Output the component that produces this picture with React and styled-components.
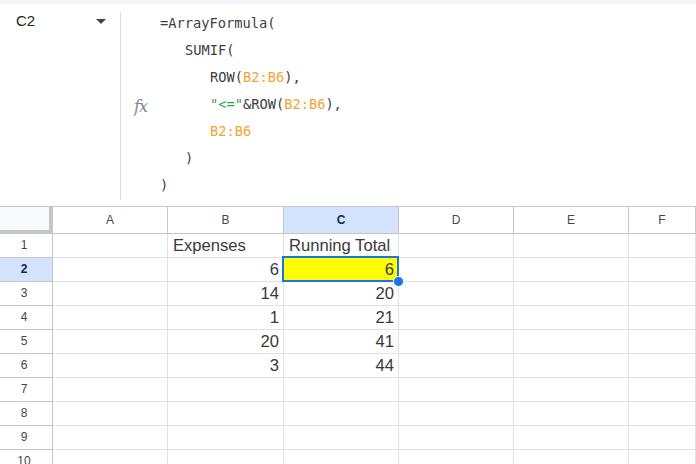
import React from "react";
import styled, { createGlobalStyle } from "styled-components";

const Global = createGlobalStyle`
  html, body { margin: 0; padding: 0; background: #fff; }
  body { width: 696px; height: 464px; overflow: hidden; font-family: "Liberation Sans", Arial, sans-serif; }
`;

const Page = styled.div`
  width: 696px;
  height: 464px;
  display: flex;
  flex-direction: column;
  overflow: hidden;
`;

const TopStrip = styled.div`
  height: 4px;
  background: #f3f5f8;
  flex: none;
`;

const FormulaBar = styled.div`
  display: flex;
  height: 202px;
  border-bottom: 1px solid #c7c7c7;
  flex: none;
`;

const NameBox = styled.div`
  width: 121px;
  display: flex;
  align-items: flex-start;
  justify-content: space-between;
  padding: 0 14px 0 16px;
  box-sizing: border-box;
  border-right: 1px solid #dadce0;
  margin: 8px 0 6px;
`;

const CellRef = styled.span`
  font-size: 15px;
  color: #1f1f1f;
  line-height: 18px;
`;

const Caret = styled.span`
  width: 0;
  height: 0;
  margin-top: 7px;
  border-left: 5px solid transparent;
  border-right: 5px solid transparent;
  border-top: 5px solid #444746;
`;

const FxCol = styled.div`
  width: 39px;
  display: flex;
  align-items: center;
  justify-content: center;
  padding-top: 2px;
  box-sizing: border-box;
`;

const Fx = styled.span`
  font-family: "DejaVu Serif", "Liberation Serif", serif;
  font-style: italic;
  font-size: 16px;
  color: #80868b;
  letter-spacing: -1px;
`;

const Code = styled.div`
  padding-top: 6px;
  font-family: "DejaVu Sans Mono", "Liberation Mono", monospace;
  font-size: 13.7px;
  color: #3c4043;
`;

const Line = styled.div`
  height: 27px;
  line-height: 27px;
  padding-left: ${(p) => p.$indent * 25}px;
  white-space: pre;
`;

const Ref = styled.span`
  color: #f5a334;
`;

const Str = styled.span`
  color: #2fa24f;
`;

const Grid = styled.div`
  display: grid;
  grid-template-columns: 53px 115px 116px 115px 115px 115px 1fr;
  grid-auto-rows: 24px;
  grid-template-rows: 27px;
`;

const Corner = styled.div`
  background: #f8f9fa;
  border-right: 4px solid #c4c7c5;
  border-bottom: 4px solid #c4c7c5;
  box-sizing: border-box;
`;

const ColHead = styled.div`
  display: flex;
  align-items: center;
  justify-content: center;
  font-size: 12px;
  color: ${(p) => (p.$active ? "#0b2a5b" : "#444746")};
  font-weight: ${(p) => (p.$active ? 700 : 400)};
  background: ${(p) => (p.$active ? "#d3e3fd" : "#fff")};
  border-right: 1px solid #c4c7c5;
  border-bottom: 1px solid #c4c7c5;
  box-sizing: border-box;
`;

const RowHead = styled.div`
  display: flex;
  align-items: center;
  justify-content: center;
  padding: 0 4px 2px 0;
  font-size: 12px;
  color: ${(p) => (p.$active ? "#0b2a5b" : "#444746")};
  font-weight: ${(p) => (p.$active ? 700 : 400)};
  background: ${(p) => (p.$active ? "#d3e3fd" : "#fff")};
  border-right: 1px solid #c4c7c5;
  border-bottom: 1px solid #c4c7c5;
  box-sizing: border-box;
`;

const Cell = styled.div`
  position: relative;
  display: flex;
  align-items: flex-end;
  justify-content: ${(p) => (p.$num ? "flex-end" : "flex-start")};
  padding: 0 4px 1px 5px;
  font-size: 16.6px;
  color: #3a3a3a;
  line-height: 20px;
  background: ${(p) => p.$fill || "#fff"};
  border-right: 1px solid #e2e2e2;
  border-bottom: 1px solid #e2e2e2;
  box-sizing: border-box;
  white-space: nowrap;
`;

const Selection = styled.div`
  position: absolute;
  left: -2px;
  top: -2px;
  right: -1px;
  bottom: -1px;
  border: 2px solid #1a73e8;
  pointer-events: none;
`;

const Handle = styled.div`
  position: absolute;
  right: -6px;
  bottom: -6px;
  width: 9px;
  height: 9px;
  border-radius: 50%;
  background: #1a73e8;
  border: 1px solid #fff;
  z-index: 2;
`;

const cols = ["A", "B", "C", "D", "E", "F"];
const data = {
  1: { B: "Expenses", C: "Running Total" },
  2: { B: 6, C: 6 },
  3: { B: 14, C: 20 },
  4: { B: 1, C: 21 },
  5: { B: 20, C: 41 },
  6: { B: 3, C: 44 },
};

export default function App() {
  const rows = [1, 2, 3, 4, 5, 6, 7, 8, 9, 10];
  return (
    <Page>
      <Global />
      <TopStrip />
      <FormulaBar>
        <NameBox>
          <CellRef>C2</CellRef>
          <Caret />
        </NameBox>
        <FxCol>
          <Fx>fx</Fx>
        </FxCol>
        <Code>
          <Line $indent={0}>=ArrayFormula(</Line>
          <Line $indent={1}>SUMIF(</Line>
          <Line $indent={2}>
            ROW(<Ref>B2:B6</Ref>),
          </Line>
          <Line $indent={2}>
            <Str>"&lt;="</Str>&amp;ROW(<Ref>B2:B6</Ref>),
          </Line>
          <Line $indent={2}>
            <Ref>B2:B6</Ref>
          </Line>
          <Line $indent={1}>)</Line>
          <Line $indent={0}>)</Line>
        </Code>
      </FormulaBar>
      <Grid>
        <Corner />
        {cols.map((c) => (
          <ColHead key={c} $active={c === "C"}>
            {c}
          </ColHead>
        ))}
        {rows.map((r) => (
          <React.Fragment key={r}>
            <RowHead $active={r === 2}>{r}</RowHead>
            {cols.map((c) => {
              const v = data[r] && data[r][c];
              const sel = r === 2 && c === "C";
              return (
                <Cell key={c} $num={typeof v === "number"} $fill={sel ? "#ffff00" : undefined}>
                  {v}
                  {sel && (
                    <>
                      <Selection />
                      <Handle />
                    </>
                  )}
                </Cell>
              );
            })}
          </React.Fragment>
        ))}
      </Grid>
    </Page>
  );
}
